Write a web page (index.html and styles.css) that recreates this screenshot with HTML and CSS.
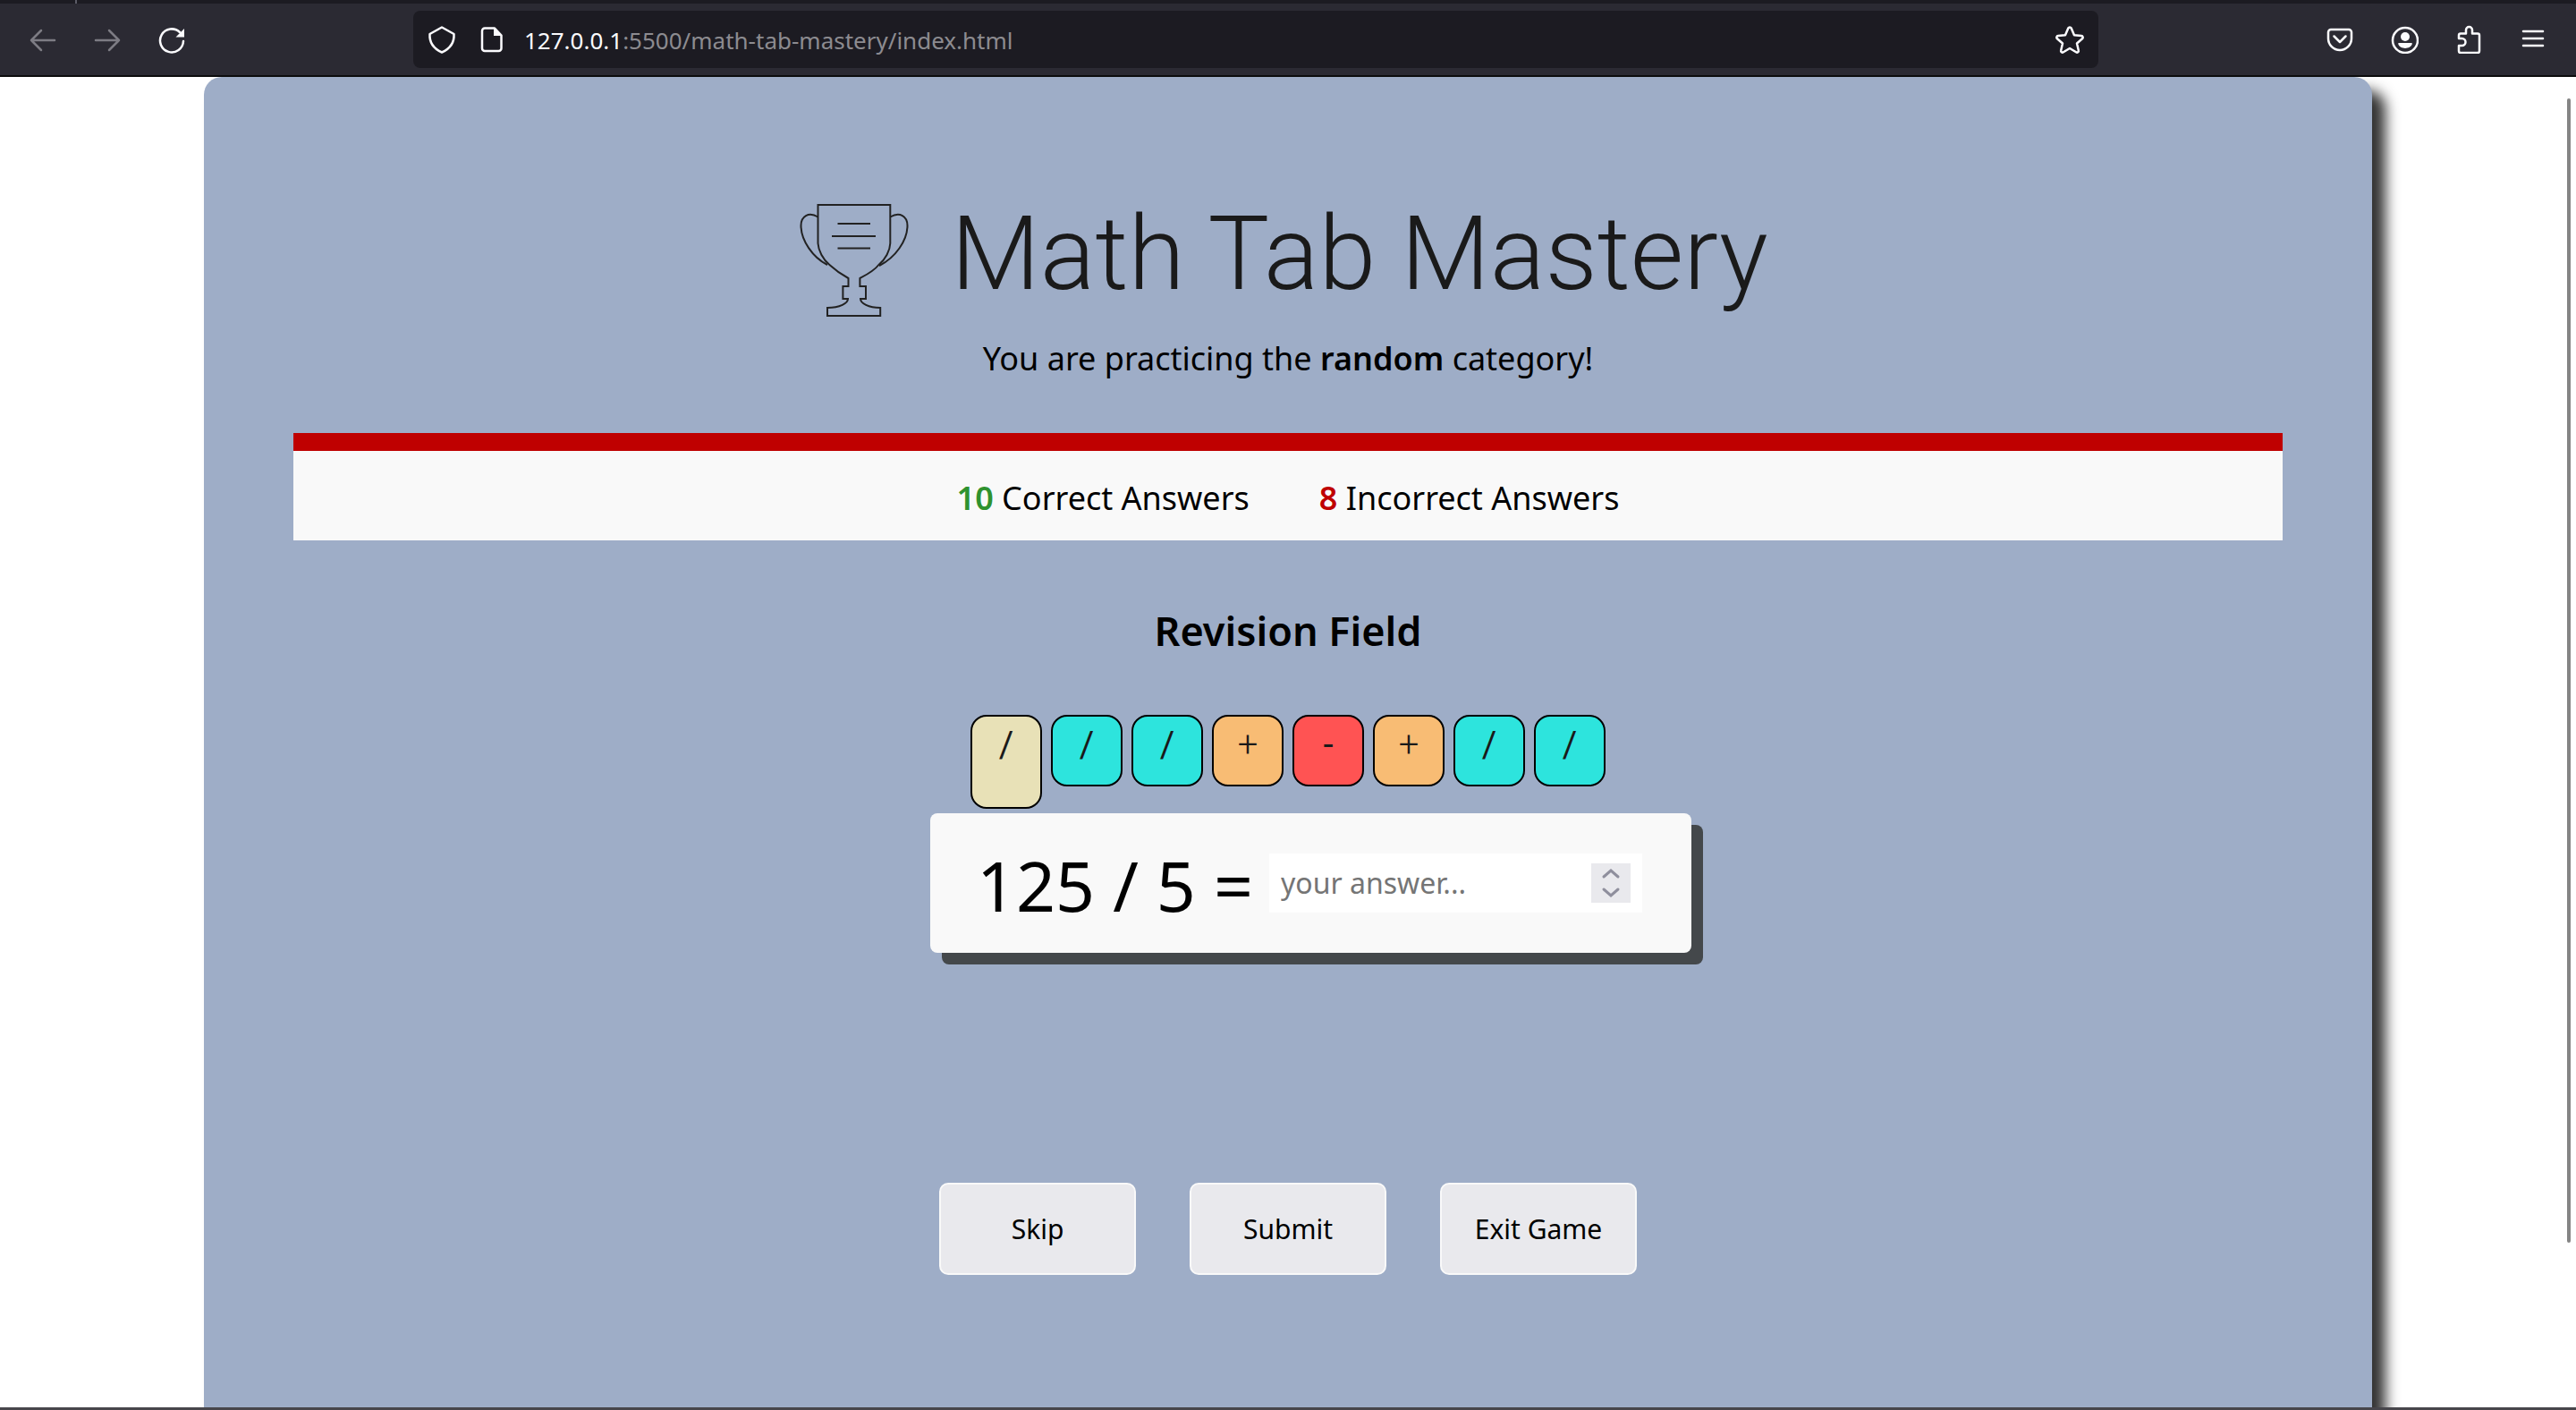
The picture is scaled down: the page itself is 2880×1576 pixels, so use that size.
FILE: index.html
```html
<!DOCTYPE html>
<html lang="en">
<head>
<meta charset="utf-8">
<title>Math Tab Mastery</title>
<link rel="stylesheet" href="styles.css">
</head>
<body>
<header class="browser">
  <div class="tab-strip"></div>
  <nav class="toolbar" aria-label="Browser toolbar">
    <div class="tools">
      <button class="tool dim" type="button" aria-label="Back"><svg viewBox="0 0 32 32"><path d="M29 17H3M14 6L3 17l11 11"/></svg></button>
      <button class="tool dim" type="button" aria-label="Forward"><svg viewBox="0 0 32 32"><path d="M3 17h26M18 6l11 11-11 11"/></svg></button>
      <button class="tool" type="button" aria-label="Reload"><svg viewBox="0 0 32 32"><path d="M29 18a13 13 0 1 1-4-10"/><path class="solid" d="M30 4v9.500h-9.500z"/></svg></button>
    </div>
    <div class="address">
      <svg viewBox="0 0 32 32"><path d="M16 2.500L29.500 10C30 18 26 26 16 30.500C6 26 2 18 2.500 10z"/></svg>
      <svg viewBox="0 0 32 32"><path d="M10 3.500h11l7.500 8V26a3 3 0 0 1-3 3H10a3 3 0 0 1-3-3V6.500a3 3 0 0 1 3-3z"/><path class="solid" d="M20 3v9h9z"/></svg>
      <span class="url"><b>127.0.0.1</b>:5500/math-tab-mastery/index.html</span>
      <button class="tool" type="button" aria-label="Bookmark this page"><svg viewBox="0 0 32 32"><path d="M14.300 3.500a2 2 0 0 1 3.400 0l3.300 7.800 8 .7a1.800 1.800 0 0 1 1 3.200l-6 5.300 1.800 7.800a1.800 1.800 0 0 1-2.700 2L16 26l-7.100 4.300a1.800 1.800 0 0 1-2.700-2L8 20.500l-6-5.300a1.800 1.800 0 0 1 1-3.200l8-.7z"/></svg></button>
    </div>
    <div class="tools">
      <button class="tool" type="button" aria-label="Save to Pocket"><svg viewBox="0 0 32 32"><path d="M6 5h20a3 3 0 0 1 3 3v7a13 13 0 0 1-26 0V8a3 3 0 0 1 3-3z"/><path d="M9.500 12.500L16 19l6.500-6.500"/></svg></button>
      <button class="tool" type="button" aria-label="Account"><svg viewBox="0 0 32 32"><circle cx="17" cy="17" r="14"/><circle class="solid" cx="17" cy="13" r="5"/><path class="solid" d="M10 20h14q1 0 .8 1c-2 6.500-13.600 6.500-15.600 0Q9 20 10 20z"/></svg></button>
      <button class="tool" type="button" aria-label="Extensions"><svg viewBox="0 0 32 32"><path d="M5 15v-3.500a2 2 0 0 1 2-2h6V5.500a3.500 3.500 0 0 1 7 0v4h6a2 2 0 0 1 2 2V29a2 2 0 0 1-2 2H7a2 2 0 0 1-2-2v-6h3.500a4 4 0 0 0 0-8z"/></svg></button>
      <button class="tool" type="button" aria-label="Menu"><svg viewBox="0 0 32 32"><path d="M5 7h22M5 15h22M5 23h22"/></svg></button>
    </div>
  </nav>
</header>

<div class="viewport">
  <main class="game">
    <div class="brand">
      <svg class="trophy" viewBox="0 0 124 128" aria-hidden="true">
        <path d="M21.500 3H102.300V46C102 54 97 64 89.400 70C84 77 76 81 68.400 85V94H75V108H69C69 113 78 118 91.200 118V127H32V118C46 118 55 113 55 108H49.400V94H55.500V85C48 81 42 77 34.400 70C27 64 22 54 21.500 46Z"/>
        <path d="M21.500 16.500C11 10 2.500 16 2.500 26C2.500 43 16 62 32 70M102.300 16.500C113 10 121.500 16 121.500 26C121.500 43 108 62 90 71"/>
        <path d="M43.500 24H80M37 38H86M43.500 51.500H80"/>
      </svg>
      <h1>Math Tab Mastery</h1>
    </div>
    <p class="category">You are practicing the <b>random</b> category!</p>

    <section class="score" aria-label="Score">
      <span><b class="right">10</b> Correct Answers</span>
      <span><b class="wrong">8</b> Incorrect Answers</span>
    </section>

    <h2>Revision Field</h2>
    <form class="play">
      <ol class="revision">
        <li class="tile current">/</li>
        <li class="tile divide">/</li>
        <li class="tile divide">/</li>
        <li class="tile plus">+</li>
        <li class="tile minus">-</li>
        <li class="tile plus">+</li>
        <li class="tile divide">/</li>
        <li class="tile divide">/</li>
      </ol>
      <div class="question">
        <label for="answer">125 / 5 =</label>
        <div class="answer">
          <input id="answer" type="number" placeholder="your answer...">
          <button class="spinner" type="button" aria-label="Change value"><svg viewBox="0 0 44 44"><path d="M14 15l8-7 8 7M14 29l8 7 8-7"/></svg></button>
        </div>
      </div>
      <div class="actions">
        <button type="button">Skip</button>
        <button type="submit">Submit</button>
        <button type="button">Exit Game</button>
      </div>
    </form>
  </main>
  <div class="scroll-thumb"></div>
</div>
</body>
</html>
```
FILE: styles.css
```css
* { box-sizing: border-box; }

body {
  margin: 0;
  height: 100vh;
  display: flex;
  flex-direction: column;
  overflow: hidden;
  background: #fff;
  color: #000;
  font: 36px/50px "Noto Sans", sans-serif;
}

h1, h2, p, ol { margin: 0; padding: 0; }

button, input {
  font: inherit;
  color: inherit;
  border: 0;
  padding: 0;
  background: none;
}

b { font-weight: 600; }

/* Browser chrome */
.browser {
  background: #2b2a33;
  border-bottom: 2px solid #0c0c0d;
}

.tab-strip {
  height: 4px;
  background: linear-gradient(#5b5b66, #5b5b66) 84px 0 / 2px 4px no-repeat #1c1b22;
}

.toolbar {
  display: flex;
  align-items: center;
  gap: 254px;
  height: 80px;
  padding: 0 32px;
}

.tools { display: flex; gap: 40px; }

.browser svg {
  display: block;
  flex: none;
  width: 32px;
  height: 32px;
  fill: none;
  stroke: #fbfbfe;
  stroke-width: 2.5;
  stroke-linecap: round;
  stroke-linejoin: round;
}

.browser .solid { fill: #fbfbfe; stroke: none; }
.browser .dim svg { stroke: #7d7c84; }

.address {
  flex: 1;
  display: flex;
  align-items: center;
  gap: 22px;
  height: 64px;
  padding: 0 16px;
  border-radius: 8px;
  background: #1c1b22;
}

.url {
  flex: 1;
  padding-top: 2px;
  font-size: 26px;
  color: #8c8b90;
}

.url b { font-weight: 400; color: #fbfbfe; }

/* Page */
.viewport {
  position: relative;
  flex: 1;
  min-height: 0;
  overflow: hidden;
  border-bottom: 3px solid #47464b;
}

.game {
  height: calc(100% + 40px);
  margin: 0 228px;
  padding: 140px 100px 0;
  border-radius: 20px;
  background: #9eadc7;
  box-shadow: 15px 15px 15px #333;
  text-align: center;
}

.brand {
  display: flex;
  justify-content: center;
  gap: 46px;
  padding-right: 10px;
}

.trophy {
  width: 124px;
  height: 128px;
  fill: none;
  stroke: #222;
  stroke-width: 2;
}

h1 {
  font: 300 115px/116px Roboto, sans-serif;
  color: #1a1a1a;
}

.category { margin-top: 22px; }

.score {
  display: flex;
  justify-content: center;
  gap: 78px;
  margin-top: 58px;
  padding: 28px 0 22px;
  border-top: 20px solid #bf0000;
  background: #f9f9f9;
}

.right { color: #2f922f; }
.wrong { color: #bf0000; }

h2 {
  margin-top: 71px;
  font-size: 45px;
  font-weight: 600;
  line-height: 60px;
}

.play {
  width: 800px;
  margin: 64px auto 0;
}

.revision {
  display: flex;
  justify-content: center;
  align-items: flex-start;
  gap: 10px;
  height: 110px;
  list-style: none;
}

.tile {
  width: 80px;
  height: 80px;
  border: 2px solid #000;
  border-radius: 18px;
  font: 40px/64px Roboto, sans-serif;
  color: #1a1a1a;
}

.current { height: 105px; background: #e8e1b7; }
.divide { background: #2de4dd; }
.plus { background: #f8bc74; font-weight: 300; }
.minus { background: #ff5353; }

.question {
  display: flex;
  align-items: flex-start;
  gap: 8px;
  width: 851px;
  padding: 45px 55px 39px 52px;
  border-radius: 8px;
  background: #f9f9f9;
  box-shadow: 13px 13px #44484b;
}

.question label {
  flex: 1;
  font-size: 77px;
  line-height: 72px;
  text-align: left;
  white-space: nowrap;
}

.answer {
  display: flex;
  align-items: center;
  flex: none;
  width: 417px;
  height: 66px;
  padding: 0 13px;
  background: #fff;
  font-size: 32px;
}

.answer input {
  flex: 1;
  min-width: 0;
  outline: 0;
  appearance: textfield;
}

.answer input::-webkit-inner-spin-button { display: none; }
.answer input::placeholder { color: #757575; }

.spinner {
  width: 44px;
  height: 44px;
  background: #e9e9ed;
}

.spinner svg {
  display: block;
  fill: none;
  stroke: #8f8f9d;
  stroke-width: 3;
  stroke-linecap: round;
}

.actions {
  display: flex;
  justify-content: center;
  gap: 60px;
  margin-top: 257px;
}

.actions button {
  width: 220px;
  height: 103px;
  border: 2px solid #f9f9f9;
  border-radius: 10px;
  background: #e9e9ed;
  font-size: 30px;
}

.scroll-thumb {
  position: absolute;
  top: 24px;
  right: 6px;
  width: 4px;
  height: 86%;
  border-radius: 2px;
  background: #858585;
}
```
